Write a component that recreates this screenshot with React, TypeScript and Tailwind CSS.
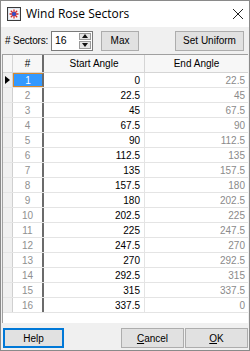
const rows = Array.from({ length: 16 }, (_, i) => ({
  n: i + 1,
  start: i * 22.5,
  end: ((i + 1) * 22.5) % 360,
}));

function TitleIcon() {
  return (
    <svg width="14" height="14" viewBox="0 0 14 14">
      <rect x="0.5" y="0.5" width="13" height="13" fill="#dfe6f0" stroke="#3a3a3a" />
      <rect x="2" y="2" width="10" height="10" fill="#f6f6f6" />
      <path d="M7 2.5 L7 11.5 M2.5 7 L11.5 7 M3.8 3.8 L10.2 10.2 M10.2 3.8 L3.8 10.2" stroke="#d02a2a" strokeWidth="1.3" />
      <circle cx="7" cy="7" r="2" fill="#2a4fd0" />
    </svg>
  );
}

function Button({ label, className }: { label: React.ReactNode; className: string }) {
  return (
    <div className={`h-5 flex items-center justify-center bg-[#e1e1e1] text-[10px] text-black ${className}`}>
      {label}
    </div>
  );
}

export default function App() {
  return (
    <div
      className="w-[250px] h-[351px] flex flex-col bg-[#f0f0f0] border border-[#8a8a8a] overflow-hidden"
      style={{ fontFamily: "Arial, 'Liberation Sans', sans-serif" }}
    >
      {/* title bar */}
      <div className="h-[26px] shrink-0 bg-white flex items-center pl-[6px] pr-[5px]">
        <TitleIcon />
        <span className="ml-[5px] text-[12px] text-black" style={{ fontFamily: "'Open Sans', sans-serif" }}>
          Wind Rose Sectors
        </span>
        <svg className="ml-auto" width="12" height="12" viewBox="0 0 12 12">
          <path d="M1 1 L11 11 M11 1 L1 11" stroke="#222" strokeWidth="1" />
        </svg>
      </div>

      {/* toolbar */}
      <div className="h-[26px] shrink-0 flex items-center pl-[4px] pr-[5px] pt-[1px]">
        <span className="text-[10px] text-black tracking-[-0.2px]">#&nbsp;Sectors:</span>
        <div className="ml-[3px] w-[42px] h-[20px] bg-white border border-[#7a7a7a] flex items-center">
          <span className="ml-[3px] text-[10.5px] text-black">16</span>
          <div className="ml-auto mr-[1px] w-[12px] h-[16px] flex flex-col gap-[1px]">
            <div className="h-[8px] bg-[#e5e5e5] border border-[#9a9a9a] flex items-center justify-center">
              <svg width="6" height="4" viewBox="0 0 6 4"><path d="M0 4 L3 0 L6 4 Z" fill="#111" /></svg>
            </div>
            <div className="h-[8px] bg-[#e5e5e5] border border-[#9a9a9a] flex items-center justify-center">
              <svg width="6" height="4" viewBox="0 0 6 4"><path d="M0 0 L3 4 L6 0 Z" fill="#111" /></svg>
            </div>
          </div>
        </div>
        <Button label="Max" className="ml-[8px] w-[38px] border border-[#adadad]" />
        <Button label="Set Uniform" className="ml-auto w-[69px] border border-[#adadad]" />
      </div>

      {/* grid */}
      <div className="mx-[1px] mt-[1px] h-[269px] shrink-0 bg-white border-l border-t border-[#a0a0a0] text-[10px] overflow-hidden">
        <div className="flex h-[18px] bg-[#f7f7f7] border-b border-[#d5d5d5]">
          <div className="w-[10px] border-r border-[#d5d5d5]" />
          <div className="w-[31px] flex items-center justify-center text-black border-r-2 border-[#6b6b6b]">#</div>
          <div className="w-[101px] flex items-center justify-center text-black border-r border-[#d5d5d5]">Start Angle</div>
          <div className="flex-1 flex items-center justify-center text-black">End Angle</div>
        </div>
        {rows.map((r) => (
          <div key={r.n} className="flex h-[15px] border-b border-[#e4e4e4]">
            <div className="w-[10px] bg-[#f0f0f0] border-r border-[#d0d0d0] flex items-center justify-center">
              {r.n === 1 && (
                <svg width="5" height="8" viewBox="0 0 5 8"><path d="M0 0 L5 4 L0 8 Z" fill="#000" /></svg>
              )}
            </div>
            <div
              className={
                r.n === 1
                  ? "w-[31px] flex items-center justify-center bg-[#3399ff] text-white border border-[#d8892e] border-r-2 border-r-[#6b6b6b]"
                  : "w-[31px] flex items-center justify-center text-[#909090] border-r-2 border-[#6b6b6b]"
              }
            >
              {r.n}
            </div>
            <div className="w-[101px] flex items-center justify-end pr-[4px] text-black border-r border-[#e4e4e4]">
              {r.start}
            </div>
            <div className="flex-1 flex items-center justify-end pr-[3px] text-[#8a8a8a]">{r.end}</div>
          </div>
        ))}
      </div>

      {/* footer */}
      <div className="flex items-center pl-[2px] pr-[1px] mt-[5px]">
        <Button label="Help" className="w-[61px] border-2 border-[#0078d7]" />
        <Button label={<span><u>C</u>ancel</span>} className="ml-auto w-[63px] border border-[#adadad]" />
        <Button label={<span><u>O</u>K</span>} className="ml-[1px] w-[63px] border border-[#adadad]" />
      </div>
    </div>
  );
}
